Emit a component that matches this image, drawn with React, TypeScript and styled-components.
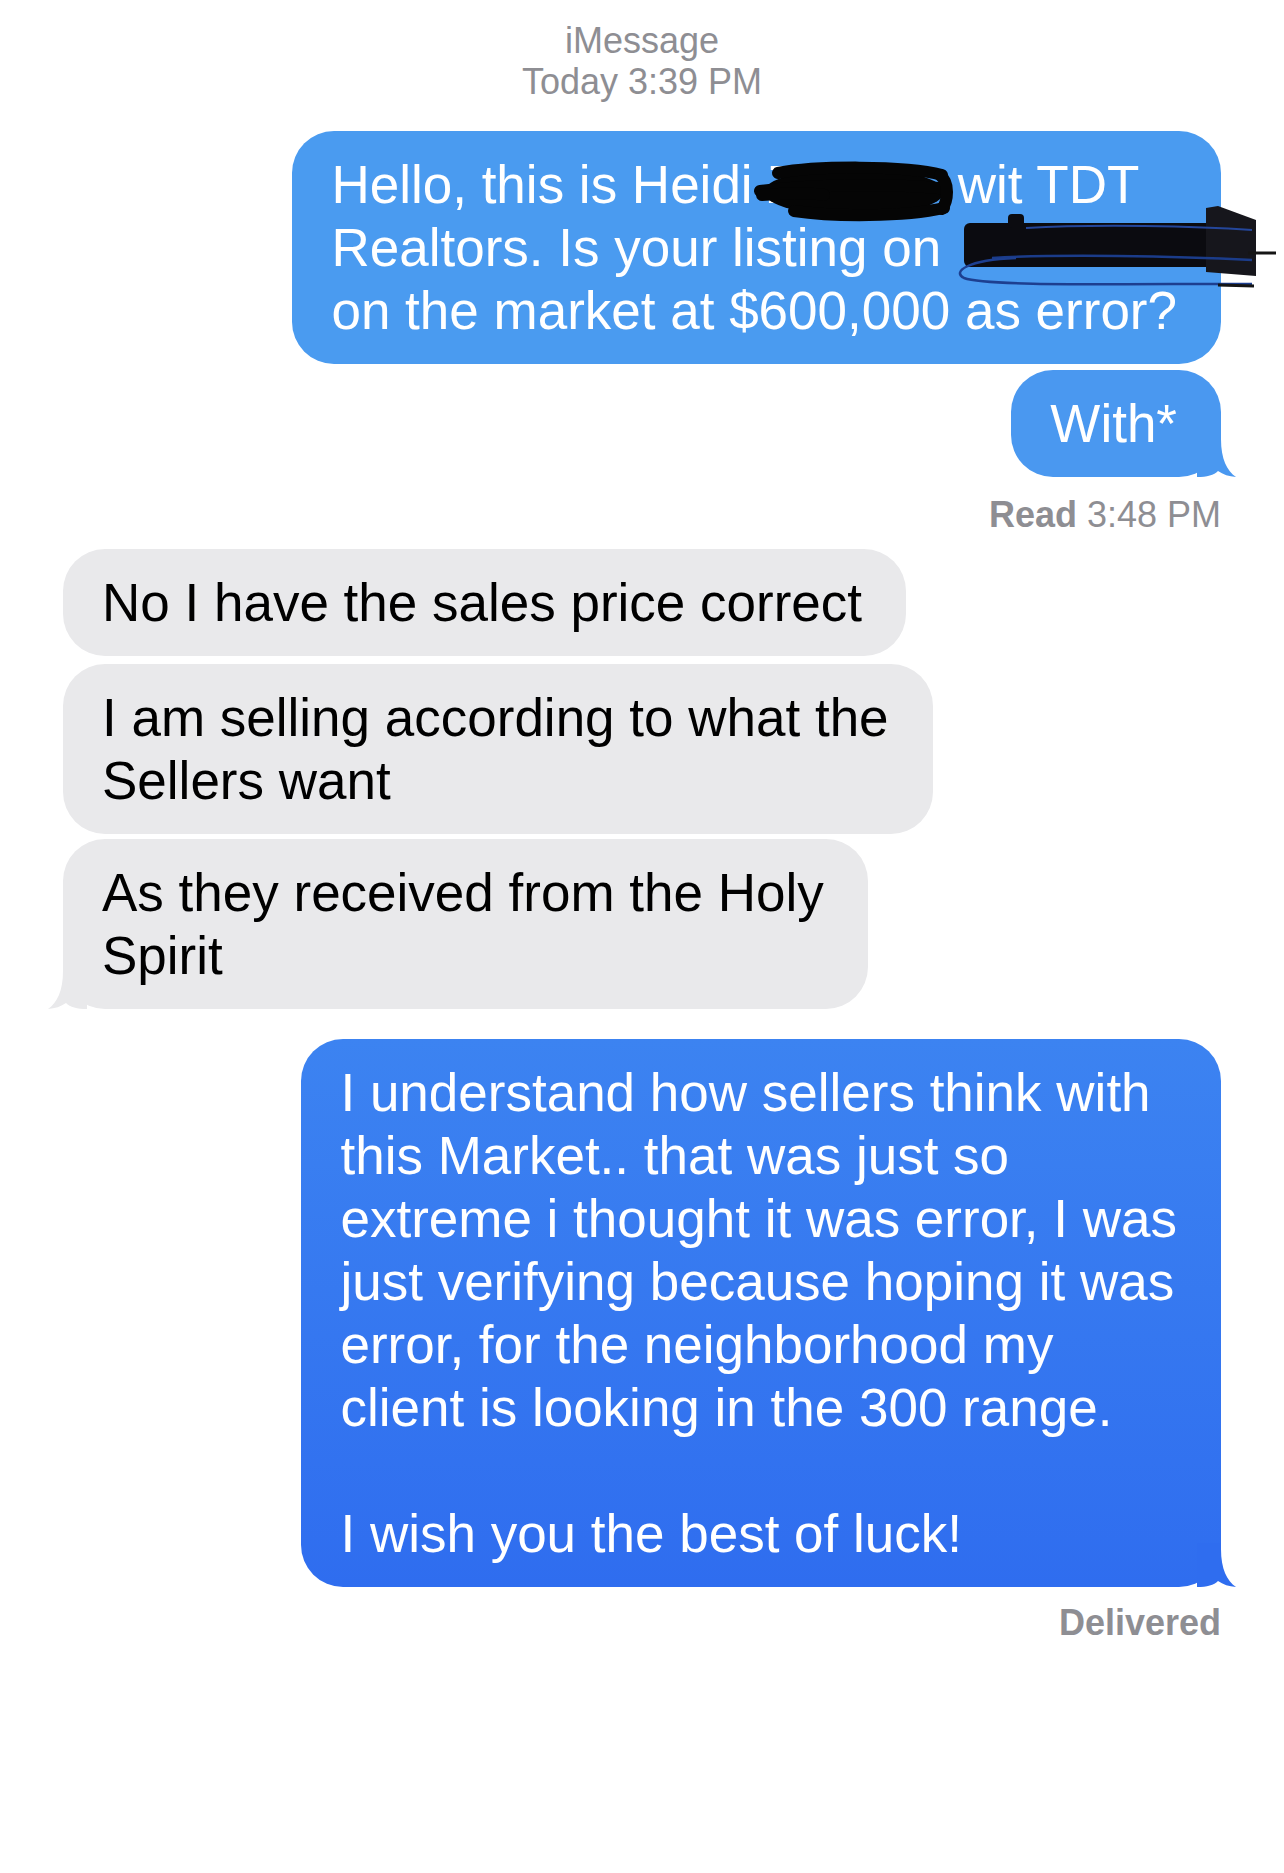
import React from "react";
import styled, { createGlobalStyle, css } from "styled-components";

const Global = createGlobalStyle`
  html, body {
    margin: 0;
    padding: 0;
    background: #ffffff;
  }
  body {
    font-family: "Liberation Sans", Arial, sans-serif;
    -webkit-font-smoothing: antialiased;
  }
`;

const Thread = styled.main`
  display: flex;
  flex-direction: column;
  padding: 20px 63px 0 63px;
  min-height: 1853px;
  background: #ffffff;
`;

const Header = styled.header`
  display: flex;
  flex-direction: column;
  align-items: center;
  font-size: 36px;
  line-height: 41px;
  color: #8e8e93;
`;

const HeaderLine = styled.span``;

type Side = "me" | "them";

const tailPath =
  "path('M0 44 L0 0 L24 0 L24 6 C24 26 30 38 39 44 C32 43.5 26 41.5 21 38 C17 42 10 44 0 44 Z')";

const Bubble = styled.div<{
  $side: Side;
  $bg: string;
  $tail?: string;
  $gap: number;
}>`
  position: relative;
  align-self: ${(p) => (p.$side === "me" ? "flex-end" : "flex-start")};
  margin-top: ${(p) => p.$gap}px;
  padding: 22px 44px 22px 39px;
  border-radius: 42px;
  background: ${(p) => p.$bg};
  color: ${(p) => (p.$side === "me" ? "#ffffff" : "#000000")};
  font-size: 53px;
  line-height: 63px;
  white-space: pre;
  ${(p) =>
    p.$tail &&
    css`
      &::before {
        content: "";
        position: absolute;
        bottom: 0;
        width: 40px;
        height: 44px;
        background: ${p.$tail};
        clip-path: ${tailPath};
        ${p.$side === "me"
          ? css`
              right: -16px;
            `
          : css`
              left: -16px;
              transform: scaleX(-1);
            `}
      }
    `}
`;

const Status = styled.div<{ $gap: number }>`
  align-self: flex-end;
  margin-top: ${(p) => p.$gap}px;
  font-size: 36px;
  line-height: 41px;
  color: #8e8e93;
`;

const Strong = styled.span`
  font-weight: 700;
`;

const Redact = styled.span<{ $w: number }>`
  display: inline-block;
  position: relative;
  width: ${(p) => p.$w}px;
  height: 0;
`;

const Scribble = styled.svg<{ $left: number; $top: number }>`
  position: absolute;
  left: ${(p) => p.$left}px;
  top: ${(p) => p.$top}px;
  overflow: visible;
  z-index: 2;
`;

const NameBlob = () => (
  <Scribble $left={-46} $top={-40} width="197" height="56" viewBox="0 0 197 56">
    <ellipse cx="100" cy="29" rx="90" ry="24" fill="#050505" />
    <g fill="none" stroke="#050505" strokeWidth="12" strokeLinecap="round">
      <path d="M24 10 C 60 3, 150 2, 188 12" />
      <path d="M6 28 C 50 22, 140 20, 192 26" />
      <path d="M8 32 C 40 30, 60 30, 70 32" />
      <path d="M40 48 C 80 54, 150 54, 190 45" />
      <path d="M186 12 C 196 20, 194 38, 188 46" />
    </g>
  </Scribble>
);

const AddressBlob = () => (
  <Scribble $left={0} $top={-60} width="322" height="85" viewBox="0 0 322 85">
    <rect x="8" y="17" width="292" height="44" rx="6" fill="#0b0b10" />
    <polygon points="250,2 262,0 300,14 300,70 250,66" fill="#16161c" />
    <rect x="52" y="8" width="16" height="14" rx="4" fill="#0b0b10" />
    <path
      d="M36 52 C 100 48, 220 50, 296 54"
      fill="none"
      stroke="#1b3c8a"
      strokeWidth="2.5"
    />
    <path
      d="M60 52 C 10 54, -4 66, 8 72 C 30 80, 140 78, 296 78"
      fill="none"
      stroke="#1d3f90"
      strokeWidth="2.5"
    />
    <path
      d="M70 22 C 140 18, 240 20, 296 24"
      fill="none"
      stroke="#24469a"
      strokeWidth="2"
    />
    <path d="M292 47 L 320 47" stroke="#151515" strokeWidth="3" />
    <path d="M262 79 L 298 80" stroke="#151515" strokeWidth="3" />
  </Scribble>
);

const lastMessage = `I understand how sellers think with
this Market.. that was just so
extreme i thought it was error, I was
just verifying because hoping it was
error, for the neighborhood my
client is looking in the 300 range.

I wish you the best of luck!`;

export default function App() {
  return (
    <>
      <Global />
      <Thread>
        <Header>
          <HeaderLine>iMessage</HeaderLine>
          <HeaderLine>Today 3:39 PM</HeaderLine>
        </Header>

        <Bubble $side="me" $bg="#4a9bf0" $gap={29}>
          Hello, this is Heidi Z
          <Redact $w={158}>
            <NameBlob />
          </Redact>
          wit TDT
          {"\n"}Realtors. Is your listing on{" "}
          <Redact $w={0}>
            <AddressBlob />
          </Redact>
          {"\n"}on the market at $600,000 as error?
        </Bubble>

        <Bubble $side="me" $bg="#4a98f0" $tail="#4a98f0" $gap={6}>
          With*
        </Bubble>

        <Status $gap={17}>
          <Strong>Read</Strong> 3:48 PM
        </Status>

        <Bubble $side="them" $bg="#e9e9eb" $gap={14}>
          No I have the sales price correct
        </Bubble>
        <Bubble $side="them" $bg="#e9e9eb" $gap={8}>
          {"I am selling according to what the\nSellers want"}
        </Bubble>
        <Bubble $side="them" $bg="#e9e9eb" $tail="#e9e9eb" $gap={5}>
          {"As they received from the Holy\nSpirit"}
        </Bubble>

        <Bubble
          $side="me"
          $bg="linear-gradient(180deg, #3c83f1 0%, #2f6def 100%)"
          $tail="#2f6def"
          $gap={30}
        >
          {lastMessage}
        </Bubble>

        <Status $gap={15}>
          <Strong>Delivered</Strong>
        </Status>
      </Thread>
    </>
  );
}
